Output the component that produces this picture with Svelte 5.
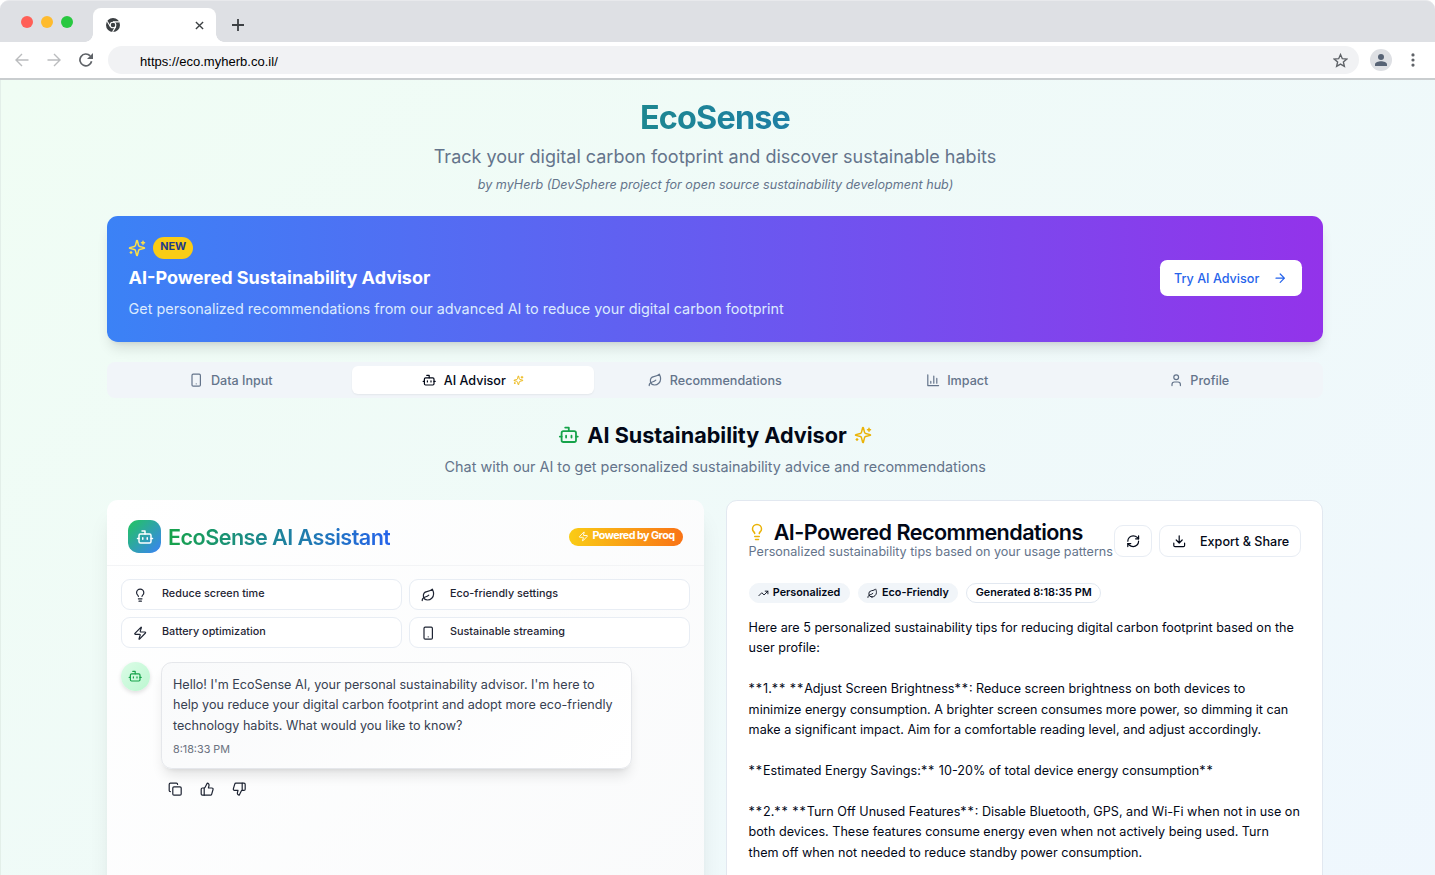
<script>
  const icons = {
    bot: '<path d="M12 8V4H8"/><rect width="16" height="12" x="4" y="8" rx="2"/><path d="M2 14h2M20 14h2M15 13v2M9 13v2"/>',
    sparkles: '<path d="M9.937 15.5A2 2 0 0 0 8.5 14.063l-6.135-1.582a.5.5 0 0 1 0-.962L8.5 9.936A2 2 0 0 0 9.937 8.5l1.582-6.135a.5.5 0 0 1 .963 0L14.063 8.5A2 2 0 0 0 15.5 9.937l6.135 1.581a.5.5 0 0 1 0 .964L15.5 14.063a2 2 0 0 0-1.437 1.437l-1.582 6.135a.5.5 0 0 1-.963 0z"/><path d="M20 3v4M22 5h-4M4 17v2M5 18H3"/>',
    phone: '<rect width="14" height="20" x="5" y="2" rx="2" ry="2"/><path d="M12 18h.01"/>',
    leaf: '<path d="M11 20A7 7 0 0 1 9.8 6.1C15.5 5 17 4.48 19 2c1 2 2 4.18 2 8 0 5.5-4.78 10-10 10Z"/><path d="M2 21c0-3 1.85-5.36 5.08-6C9.5 14.52 12 13 13 12"/>',
    chart: '<path d="M3 3v18h18M18 17V9M13 17V5M8 17v-3"/>',
    user: '<path d="M19 21v-2a4 4 0 0 0-4-4H9a4 4 0 0 0-4 4v2"/><circle cx="12" cy="7" r="4"/>',
    bulb: '<path d="M15 14c.2-1 .7-1.7 1.5-2.5 1-.9 1.5-2.2 1.5-3.5A6 6 0 0 0 6 8c0 1 .2 2.2 1.5 3.5.7.7 1.3 1.5 1.5 2.5M9 18h6M10 22h4"/>',
    zap: '<path d="M4 14a1 1 0 0 1-.78-1.63l9.9-10.2a.5.5 0 0 1 .86.46l-1.92 6.02A1 1 0 0 0 13 10h7a1 1 0 0 1 .78 1.63l-9.9 10.2a.5.5 0 0 1-.86-.46l1.92-6.02A1 1 0 0 0 11 14z"/>',
    arrow: '<path d="M5 12h14M12 5l7 7-7 7"/>',
    refresh: '<path d="M3 12a9 9 0 0 1 9-9 9.75 9.75 0 0 1 6.74 2.74L21 8"/><path d="M21 3v5h-5"/><path d="M21 12a9 9 0 0 1-9 9 9.75 9.75 0 0 1-6.74-2.74L3 16"/><path d="M8 16H3v5"/>',
    download: '<path d="M21 15v4a2 2 0 0 1-2 2H5a2 2 0 0 1-2-2v-4M7 10l5 5 5-5M12 15V3"/>',
    trend: '<path d="m22 7-8.5 8.5-5-5L2 17"/><path d="M16 7h6v6"/>',
    copy: '<rect width="14" height="14" x="8" y="8" rx="2" ry="2"/><path d="M4 16c-1.1 0-2-.9-2-2V4c0-1.1.9-2 2-2h10c1.1 0 2 .9 2 2"/>',
    up: '<path d="M7 10v12"/><path d="M15 5.88 14 10h5.83a2 2 0 0 1 1.92 2.56l-2.33 8A2 2 0 0 1 17.5 22H4a2 2 0 0 1-2-2v-8a2 2 0 0 1 2-2h2.76a2 2 0 0 0 1.79-1.11L12 2a3.13 3.13 0 0 1 3 3.88Z"/>',
    down: '<path d="M17 14V2"/><path d="M9 18.12 10 14H4.17a2 2 0 0 1-1.92-2.56l2.33-8A2 2 0 0 1 6.5 2H20a2 2 0 0 1 2 2v8a2 2 0 0 1-2 2h-2.76a2 2 0 0 0-1.79 1.11L12 22a3.13 3.13 0 0 1-3-3.88Z"/>'
  };
  const tabs = [
    { icon: 'phone', label: 'Data Input' },
    { icon: 'bot', label: 'AI Advisor', active: true },
    { icon: 'leaf', label: 'Recommendations' },
    { icon: 'chart', label: 'Impact' },
    { icon: 'user', label: 'Profile' }
  ];
  const prompts = [
    { icon: 'bulb', label: 'Reduce screen time' },
    { icon: 'leaf', label: 'Eco-friendly settings' },
    { icon: 'zap', label: 'Battery optimization' },
    { icon: 'phone', label: 'Sustainable streaming' }
  ];
  const greeting = [
    "Hello! I'm EcoSense AI, your personal sustainability advisor. I'm here to",
    'help you reduce your digital carbon footprint and adopt more eco-friendly',
    'technology habits. What would you like to know?'
  ];
  const tips = [
    'Here are 5 personalized sustainability tips for reducing digital carbon footprint based on the',
    'user profile:',
    '',
    '**1.** **Adjust Screen Brightness**: Reduce screen brightness on both devices to',
    'minimize energy consumption. A brighter screen consumes more power, so dimming it can',
    'make a significant impact. Aim for a comfortable reading level, and adjust accordingly.',
    '',
    '**Estimated Energy Savings:** 10-20% of total device energy consumption**',
    '',
    '**2.** **Turn Off Unused Features**: Disable Bluetooth, GPS, and Wi-Fi when not in use on',
    'both devices. These features consume energy even when not actively being used. Turn',
    'them off when not needed to reduce standby power consumption.'
  ];
</script>

{#snippet icon(name, size)}
  <svg class="icon" width={size} height={size} viewBox="0 0 24 24" fill="none" stroke="currentColor" stroke-width="2" stroke-linecap="round" stroke-linejoin="round">{@html icons[name]}</svg>
{/snippet}

<div class="window">
  <div class="tabstrip">
    <div class="lights"><i class="red"></i><i class="amber"></i><i class="green"></i></div>
    <div class="tab">
      <svg width="14" height="14" viewBox="0 0 14 14"><circle cx="7" cy="7" r="7" fill="#3c4043"/><circle cx="7" cy="7" r="2.8" fill="#3c4043" stroke="#fff" stroke-width="1.1"/><path d="M7 3.9h6.3M4.3 8.6 1.2 3.2M9.7 8.6l-3.1 5.3" stroke="#fff" stroke-width="1.1"/></svg>
      <svg width="9" height="9" viewBox="0 0 10 10"><path d="M1 1l8 8M9 1l-8 8" stroke="#3c4043" stroke-width="1.5"/></svg>
    </div>
    <svg class="plus" width="12" height="12" viewBox="0 0 12 12"><path d="M6 0v12M0 6h12" stroke="#3c4043" stroke-width="1.8"/></svg>
  </div>
  <div class="toolbar">
    <svg width="14" height="14" viewBox="0 0 14 14" fill="none" stroke="#babcbe" stroke-width="1.4"><path d="M13.5 7H1.5M7 1 1 7l6 6"/></svg>
    <svg width="14" height="14" viewBox="0 0 14 14" fill="none" stroke="#babcbe" stroke-width="1.4"><path d="M.5 7h12M7 1l6 6-6 6"/></svg>
    <svg width="14" height="14" viewBox="0 0 14 14"><path d="M12.6 8.2A5.9 5.9 0 1 1 11.2 2.9" fill="none" stroke="#5f6368" stroke-width="1.7"/><path d="M14 0v6H8z" fill="#5f6368"/></svg>
    <div class="address">
      <span>https://eco.myherb.co.il/</span>
      <svg width="15" height="15" viewBox="0 0 24 24"><path d="M12 2.5l2.9 6.6 7.1.6-5.4 4.7 1.6 7L12 17.700l-6.200 3.700 1.600-7L2 9.700l7.100-.6z" fill="none" stroke="#5f6368" stroke-width="2.2"/></svg>
    </div>
    <div class="account"><svg width="12" height="12" viewBox="0 0 12 12" fill="#576375"><circle cx="6" cy="3" r="3"/><path d="M0 12v-1.700C0 8.300 3.500 7.200 6 7.200s6 1.100 6 3.100V12z"/></svg></div>
    <svg class="dots" width="4" height="14" viewBox="0 0 4 14" fill="#5f6368"><circle cx="2" cy="1.900" r="1.600"/><circle cx="2" cy="7" r="1.600"/><circle cx="2" cy="12.100" r="1.600"/></svg>
  </div>

  <div class="page">
    <header>
      <h1>EcoSense</h1>
      <p class="lead">Track your digital carbon footprint and discover sustainable habits</p>
      <p class="by">by myHerb (DevSphere project for open source sustainability development hub)</p>
    </header>

    <section class="banner">
      <div>
        <div class="new-row">{@render icon('sparkles', 18)}<span class="new">NEW</span></div>
        <h3>AI-Powered Sustainability Advisor</h3>
        <p>Get personalized recommendations from our advanced AI to reduce your digital carbon footprint</p>
      </div>
      <button class="try"><span>Try AI Advisor</span>{@render icon('arrow', 14.4)}</button>
    </section>

    <nav>
      {#each tabs as t}
        <div class="nav-item" class:active={t.active}>
          {@render icon(t.icon, 14.4)}<span>{t.label}</span>
          {#if t.active}<em>{@render icon('sparkles', 10.8)}</em>{/if}
        </div>
      {/each}
    </nav>

    <div class="intro">
      <h2><i class="g">{@render icon('bot', 21.6)}</i><span>AI Sustainability Advisor</span><i class="y">{@render icon('sparkles', 18)}</i></h2>
      <p>Chat with our AI to get personalized sustainability advice and recommendations</p>
    </div>

    <div class="columns">
      <section class="card chat">
        <div class="chat-head">
          <div class="logo">{@render icon('bot', 18)}</div>
          <h4>EcoSense AI Assistant</h4>
          <div class="groq">{@render icon('zap', 10.8)}<span>Powered by Groq</span></div>
        </div>
        <div class="prompts">
          {#each prompts as p}
            <button>{@render icon(p.icon, 14.4)}<span>{p.label}</span></button>
          {/each}
        </div>
        <div class="message">
          <div class="avatar">{@render icon('bot', 14.4)}</div>
          <div>
            <div class="bubble">
              {#each greeting as line}<p>{line}</p>{/each}
              <small>8:18:33 PM</small>
            </div>
            <div class="actions">{@render icon('copy', 14.4)}{@render icon('up', 14.4)}{@render icon('down', 14.4)}</div>
          </div>
        </div>
      </section>

      <section class="card recs">
        <div class="recs-head">
          <div class="titles">
            <h4><i class="y">{@render icon('bulb', 18)}</i><span>AI-Powered Recommendations</span></h4>
            <p>Personalized sustainability tips based on your usage patterns</p>
          </div>
          <div class="buttons">
            <button>{@render icon('refresh', 14.4)}</button>
            <button class="export">{@render icon('download', 14.4)}<span>Export &amp; Share</span></button>
          </div>
        </div>
        <div class="chips">
          <div class="chip">{@render icon('trend', 10.8)}<span>Personalized</span></div>
          <div class="chip">{@render icon('leaf', 10.8)}<span>Eco-Friendly</span></div>
          <div class="chip outline"><span>Generated 8:18:35 PM</span></div>
        </div>
        <div class="tips">
          {#each tips as line}
            <p>{#each line.split(/(\*\*)/) as part}{#if part === '**'}<span class="mark">**</span>{:else}{part}{/if}{/each}</p>
          {/each}
        </div>
      </section>
    </div>
  </div>
</div>

<style>
  :global(body) { margin: 0; background: #fff; overflow: hidden; }
  * { box-sizing: border-box; }
  h1, h2, h3, h4, p { margin: 0; white-space: nowrap; }
  i, em { font-style: normal; display: flex; }
  svg { flex: none; display: block; }
  button { font: inherit; color: inherit; background: #fff; border: 0; margin: 0; padding: 0; }
  .window { width: 1435px; height: 875px; overflow: hidden; display: flex; flex-direction: column; font-family: Inter, "Liberation Sans", sans-serif; color: #020817; }

  .tabstrip { height: 42px; flex: none; background: #dee0e4; border-radius: 9px 9px 0 0; border-top: 1px solid #e8e9ec; display: flex; align-items: flex-end; }
  .lights { display: flex; gap: 8px; padding: 0 20px 14px 21px; }
  .lights i { width: 12px; height: 12px; border-radius: 50%; }
  .red { background: #ff5f57; } .amber { background: #febb2e; } .green { background: #28c840; }
  .tab { width: 123px; height: 34px; background: #fff; border-radius: 8px 8px 0 0; display: flex; align-items: center; justify-content: space-between; padding: 0 12px 0 13px; position: relative; }
  .tab::before, .tab::after { content: ""; position: absolute; bottom: 0; width: 8px; height: 8px; }
  .tab::before { left: -8px; background: radial-gradient(circle at 0 0, transparent 7.5px, #fff 8px); }
  .tab::after { right: -8px; background: radial-gradient(circle at 100% 0, transparent 7.5px, #fff 8px); }
  .plus { margin: 0 0 11px 16px; }
  .toolbar { height: 38px; flex: none; background: #fff; border-bottom: 2px solid #c9cdcf; display: flex; align-items: center; padding: 0 20px 0 15px; gap: 18px; }
  .address { flex: 1; height: 28px; margin-left: -3px; border-radius: 14px; background: #f1f2f4; display: flex; align-items: center; justify-content: space-between; padding: 0 11px 0 32px; font: 13px "Liberation Sans", sans-serif; color: #000; }
  .address span { padding-top: 2px; letter-spacing: 0.02px; }
  .account { width: 22px; height: 22px; margin-left: -7px; border-radius: 50%; background: #dee0e4; display: flex; align-items: center; justify-content: center; }
  .dots { margin-left: 1px; }

  .page { flex: 1; min-height: 0; padding: 19px 112px 0 106px; background: linear-gradient(135deg, #f0fdf4, #eff6ff) 0 0 / 100% 1150px no-repeat; border-left: 1px solid #e3efe9; }
  header { text-align: center; height: 116.500px; color: #64748b; }
  h1 { font-size: 32.4px; line-height: 37px; font-weight: 700; letter-spacing: -0.81px; background: linear-gradient(90deg, #16a34a, #2563eb); background-clip: text; -webkit-background-clip: text; color: transparent; }
  .lead { font-size: 18px; line-height: 25.2px; margin-top: 7.500px; }
  .by { font-size: 12.6px; line-height: 18px; margin-top: 7px; font-style: italic; padding-left: 1px; }

  .banner { height: 126px; border-radius: 10.8px; background: linear-gradient(90deg, #3b82f6, #9333ea); display: flex; align-items: center; justify-content: space-between; padding: 0 21px 1px 21.600px; color: #fff; box-shadow: 0 9px 13px -3px rgba(0,0,0,.12), 0 4px 5px -4px rgba(0,0,0,.1); }
  .new-row { display: flex; align-items: center; gap: 7px; color: #fde047; margin-left: -0.6px; }
  .new { height: 22px; padding: 0 7.200px; border-radius: 11px; background: #facc15; color: #1e3a8a; font-size: 10.8px; font-weight: 700; line-height: 20px; }
  h3 { font-size: 18px; line-height: 25.2px; font-weight: 700; margin-top: 6.500px; }
  .banner p { font-size: 14.4px; line-height: 21.6px; margin-top: 7px; color: #dbeafe; }
  .try { height: 36px; width: 142px; border-radius: 7.2px; color: #2563eb; font-size: 12.6px; font-weight: 500; display: flex; align-items: center; justify-content: space-between; padding: 0 14.400px 0 14px; }

  nav { height: 36px; margin-top: 20.500px; padding: 4px 3px; border-radius: 8px; background: #f1f5f9; display: grid; grid-template-columns: repeat(5, 1fr); color: #64748b; font-size: 12.6px; font-weight: 500; }
  .nav-item { display: flex; align-items: center; justify-content: center; gap: 7.2px; border-radius: 6px; }
  .nav-item.active { background: #fff; color: #020817; box-shadow: 0 1px 2px rgba(0,0,0,.06); }
  .nav-item em { color: #eab308; }

  .intro { text-align: center; margin-top: 22.500px; height: 79px; padding-left: 0.5px; }
  h2 { display: flex; align-items: center; justify-content: center; gap: 7.600px; font-size: 21.6px; line-height: 28.8px; font-weight: 700; }
  .g { color: #16a34a; } .y { color: #eab308; }
  .intro p { font-size: 14.4px; line-height: 21.6px; margin-top: 7px; color: #64748b; }

  .columns { display: grid; grid-template-columns: 1fr 1fr; gap: 22px; }
  .card { height: 460px; border-radius: 10.8px; background: #fff; }
  .chat { background: linear-gradient(135deg, #fff, #f9fafb); box-shadow: 0 18px 23px -5px rgba(0,0,0,.1), 0 7px 9px -6px rgba(0,0,0,.1); }
  .chat-head { height: 66px; border-bottom: 1px solid #f3f4f6; display: flex; align-items: center; padding: 9px 21px 0; }
  .logo { width: 33px; height: 33px; border-radius: 10.8px; background: linear-gradient(135deg, #22c55e, #3b82f6); color: #fff; display: flex; align-items: center; justify-content: center; margin-right: 7px; }
  h4 { font-size: 21.6px; font-weight: 600; letter-spacing: -0.54px; line-height: 22px; }
  .chat-head h4 { line-height: 28px; background: linear-gradient(90deg, #16a34a, #2563eb); background-clip: text; -webkit-background-clip: text; color: transparent; }
  .groq { margin-left: auto; height: 18px; width: 114px; border-radius: 9px; background: linear-gradient(90deg, #facc15, #f97316); color: #fff; font-size: 10.8px; font-weight: 700; letter-spacing: -0.54px; line-height: 16px; display: flex; align-items: center; padding-left: 9px; gap: 3.700px; white-space: nowrap; }
  .groq span { padding-bottom: 1px; }
  .prompts { display: grid; grid-template-columns: 1fr 1fr; gap: 7px; padding: 13.800px 14px 0; }
  .prompts button { height: 31px; border: 1px solid #e8edf4; border-radius: 9px; display: flex; align-items: center; gap: 14.600px; padding-left: 11px; font-size: 10.8px; font-weight: 500; color: #1e2433; }
  .prompts button span { padding-bottom: 3px; letter-spacing: 0.02px; }
  .message { display: flex; gap: 11px; padding: 13.500px 14px 0; }
  .avatar { width: 29px; height: 29px; border-radius: 50%; background: linear-gradient(135deg, #dcfce7, #bbf7d0); color: #16a34a; display: flex; align-items: center; justify-content: center; box-shadow: 0 2px 4px rgba(0,0,0,.12); }
  .bubble { width: 471px; height: 107px; border: 1px solid #e5e7eb; border-radius: 10.8px; background: linear-gradient(135deg, #f9fafb, #fff); padding: 12px 11px; box-shadow: 0 9px 13px -3px rgba(0,0,0,.11), 0 4px 5px -4px rgba(0,0,0,.1); color: #374151; font-size: 12.6px; line-height: 20.475px; }
  .bubble small { display: block; font-size: 10.8px; line-height: 14.4px; color: #6b7280; margin-top: 7px; }
  .actions { display: flex; gap: 17.600px; padding: 12.800px 0 0 7px; color: #1e2433; }

  .recs { border: 1px solid #e2e8f0; padding: 20px 21.600px; }
  .recs-head { display: flex; height: 48px; justify-content: space-between; }
  .titles h4 { display: flex; align-items: center; gap: 7.600px; margin-left: -0.5px; }
  .titles p { font-size: 12.6px; line-height: 18px; color: #64748b; padding-top: .8px; }
  .buttons { display: flex; gap: 7px; padding-top: 4.500px; margin-right: -1px; }
  .buttons button { height: 32px; width: 38px; border: 1px solid #e8edf4; border-radius: 9px; display: flex; align-items: center; justify-content: center; font-size: 12.6px; font-weight: 500; }
  .buttons button.export { width: 142px; gap: 14px; }
  .chips { display: flex; gap: 8px; margin-top: 14.500px; }
  .chip { height: 20px; border-radius: 10px; background: #f1f5f9; border: 1px solid #f1f5f9; font-size: 10.8px; font-weight: 600; display: flex; align-items: center; gap: 3.900px; padding: 0 8.500px; white-space: nowrap; }
  .chip span { padding-bottom: 2px; }
  .chip.outline { background: #fff; border-color: #e2e8f0; }
  .tips { margin-top: 14.700px; font-size: 12.6px; line-height: 20.475px; }
  .tips p { min-height: 20.475px; }
  .mark { letter-spacing: 0.9px; }
</style>
